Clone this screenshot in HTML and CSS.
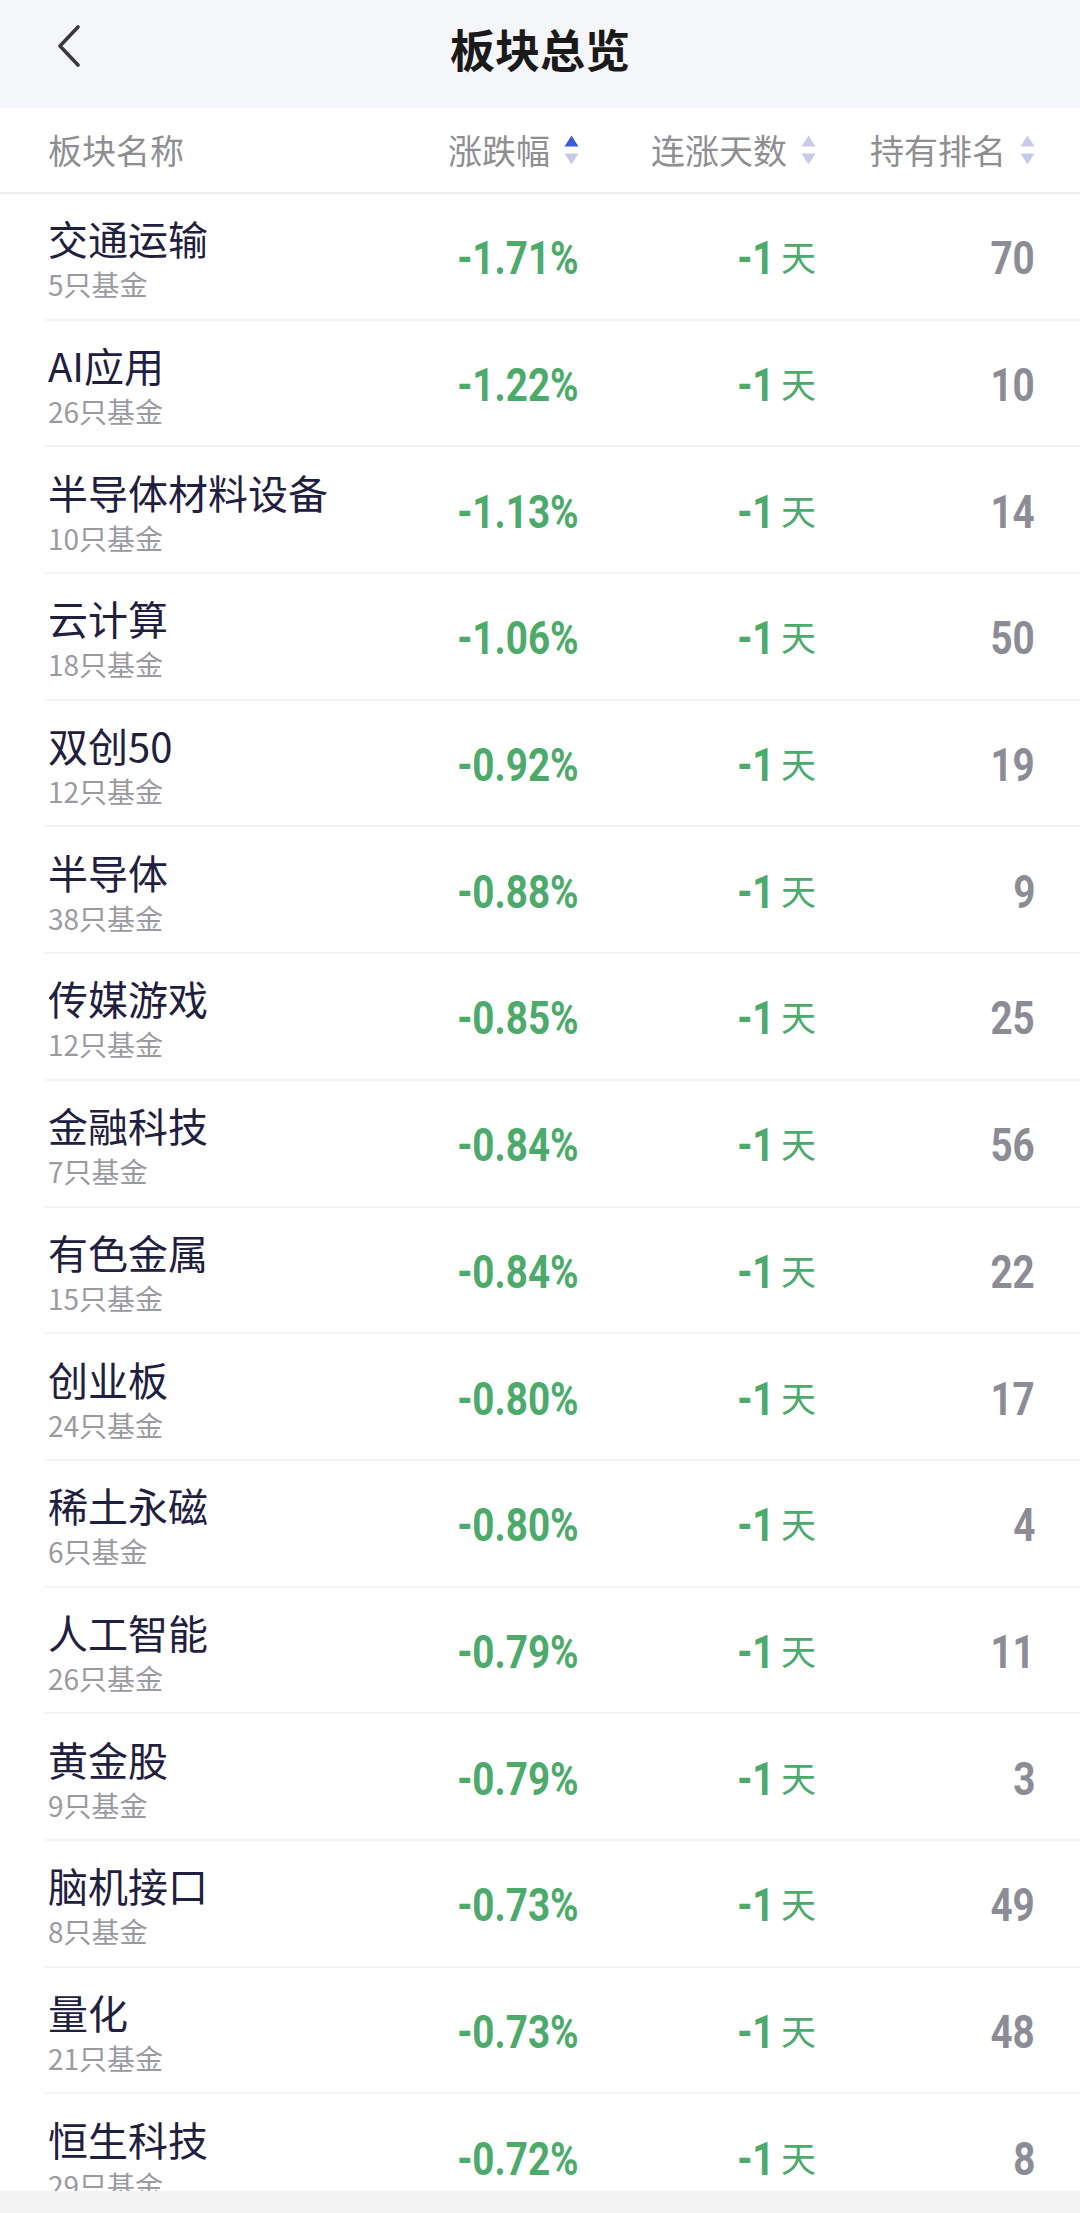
FILE: index.html
```html
<!DOCTYPE html>
<html lang="zh-CN">
  <head>
    <meta charset="UTF-8" />
    <meta name="viewport" content="width=device-width, initial-scale=1.0" />
    <title>板块总览</title>
    <link rel="stylesheet" href="styles.css">
  </head>
  <body>
    <div class="page">
      <header class="topbar">
        <a class="back" href="#">
          <svg width="26" height="42" viewBox="0 0 26 42">
            <polyline points="22,2 4,21 22,40" fill="none" stroke="#3a3a3c" stroke-width="3.6" stroke-linecap="round" stroke-linejoin="round" />
          </svg>
        </a>
        <h1>板块总览</h1>
      </header>

      <div class="thead">
        <div class="th name">板块名称</div>
        <div class="th sortable asc">涨跌幅<span class="sort"></span></div>
        <div class="th sortable">连涨天数<span class="sort"></span></div>
        <div class="th sortable">持有排名<span class="sort"></span></div>
      </div>

      <div class="list" id="list"></div>

      <div class="bottom-bar"></div>
    </div>

    <script>
      const sectors = [
        ["交通运输", 5, "-1.71%", 70],
        ["AI应用", 26, "-1.22%", 10],
        ["半导体材料设备", 10, "-1.13%", 14],
        ["云计算", 18, "-1.06%", 50],
        ["双创50", 12, "-0.92%", 19],
        ["半导体", 38, "-0.88%", 9],
        ["传媒游戏", 12, "-0.85%", 25],
        ["金融科技", 7, "-0.84%", 56],
        ["有色金属", 15, "-0.84%", 22],
        ["创业板", 24, "-0.80%", 17],
        ["稀土永磁", 6, "-0.80%", 4],
        ["人工智能", 26, "-0.79%", 11],
        ["黄金股", 9, "-0.79%", 3],
        ["脑机接口", 8, "-0.73%", 49],
        ["量化", 21, "-0.73%", 48],
        ["恒生科技", 29, "-0.72%", 8]
      ];

      const sortIcon = `
        <svg width="15" height="30" viewBox="0 0 15 30">
          <polygon class="up" points="0.5,11.5 7.5,0.5 14.5,11.5" />
          <polygon class="down" points="0.5,18.5 14.5,18.5 7.5,29.5" />
        </svg>`;
      document.querySelectorAll(".sort").forEach(el => el.innerHTML = sortIcon);

      document.getElementById("list").innerHTML = sectors.map(([name, funds, change, rank]) => `
        <div class="row">
          <div class="name">
            <div class="title">${name}</div>
            <div class="sub">${funds}只基金</div>
          </div>
          <div class="cell down"><span class="num">${change}</span></div>
          <div class="cell down"><span class="num">-1</span><span class="unit">天</span></div>
          <div class="cell rank"><span class="num">${rank}</span></div>
        </div>
      `).join("");
    </script>
  </body>
</html>
```

FILE: styles.css
```css
html, body {
  margin: 0;
  padding: 0;
  background-color: #fff;
}
body {
  font-family: "Noto Sans CJK SC", "Noto Sans", sans-serif;
  color: #1f2040;
}
.page {
  height: 2213px;
  display: flex;
  flex-direction: column;
  overflow: hidden;
}
.topbar {
  flex: none;
  height: 108px;
  box-sizing: border-box;
  padding-bottom: 12px;
  background-color: #f5f6fa;
  display: flex;
  align-items: center;
  justify-content: center;
  position: relative;
}
.topbar h1 {
  margin: 0;
  font-size: 45px;
  font-weight: 700;
  color: #1a1a1a;
  line-height: 1;
}
.back {
  position: absolute;
  left: 56px;
  top: 25px;
  display: block;
  line-height: 0;
}
.thead,
.row {
  display: grid;
  grid-template-columns: 1fr 160px 237px 219px;
  align-items: center;
}
.thead {
  flex: none;
  height: 86px;
  box-sizing: border-box;
  padding: 0 45px 0 48px;
  border-bottom: 2px solid #efeff1;
}
.th {
  font-size: 34px;
  color: #8e8e93;
  line-height: 1;
}
.th.sortable {
  display: flex;
  align-items: center;
  justify-content: flex-end;
}
.sort {
  margin-left: 14px;
  line-height: 0;
}
.sort polygon {
  fill: #c9cae8;
}
.asc .sort .up {
  fill: #3a5bdc;
}
.list {
  flex: 1;
  overflow: hidden;
}
.row {
  height: 126.7px;
  box-sizing: border-box;
  margin-left: 45px;
  padding: 4px 45px 0 3px;
  border-bottom: 2px solid #f3f3f5;
}
.row .title {
  font-size: 40px;
  line-height: 52px;
  color: #1f2040;
  white-space: nowrap;
}
.row .sub {
  font-size: 28px;
  line-height: 40px;
  color: #9a9aa2;
}
.cell {
  text-align: right;
  display: flex;
  align-items: center;
  justify-content: flex-end;
}
.num {
  display: inline-block;
  font-family: Roboto, "Liberation Sans", sans-serif;
  font-weight: 700;
  font-size: 46px;
  line-height: 1;
  transform: scaleX(0.84);
  transform-origin: right center;
}
.cell .num + .unit {
  margin-left: 6px;
}
.unit {
  font-size: 35px;
  line-height: 1;
  margin-bottom: 5px;
}
.down {
  color: #4caa6b;
}
.rank {
  color: #8b8c95;
}
.bottom-bar {
  flex: none;
  height: 22px;
  background-color: #f4f4f4;
}
```
